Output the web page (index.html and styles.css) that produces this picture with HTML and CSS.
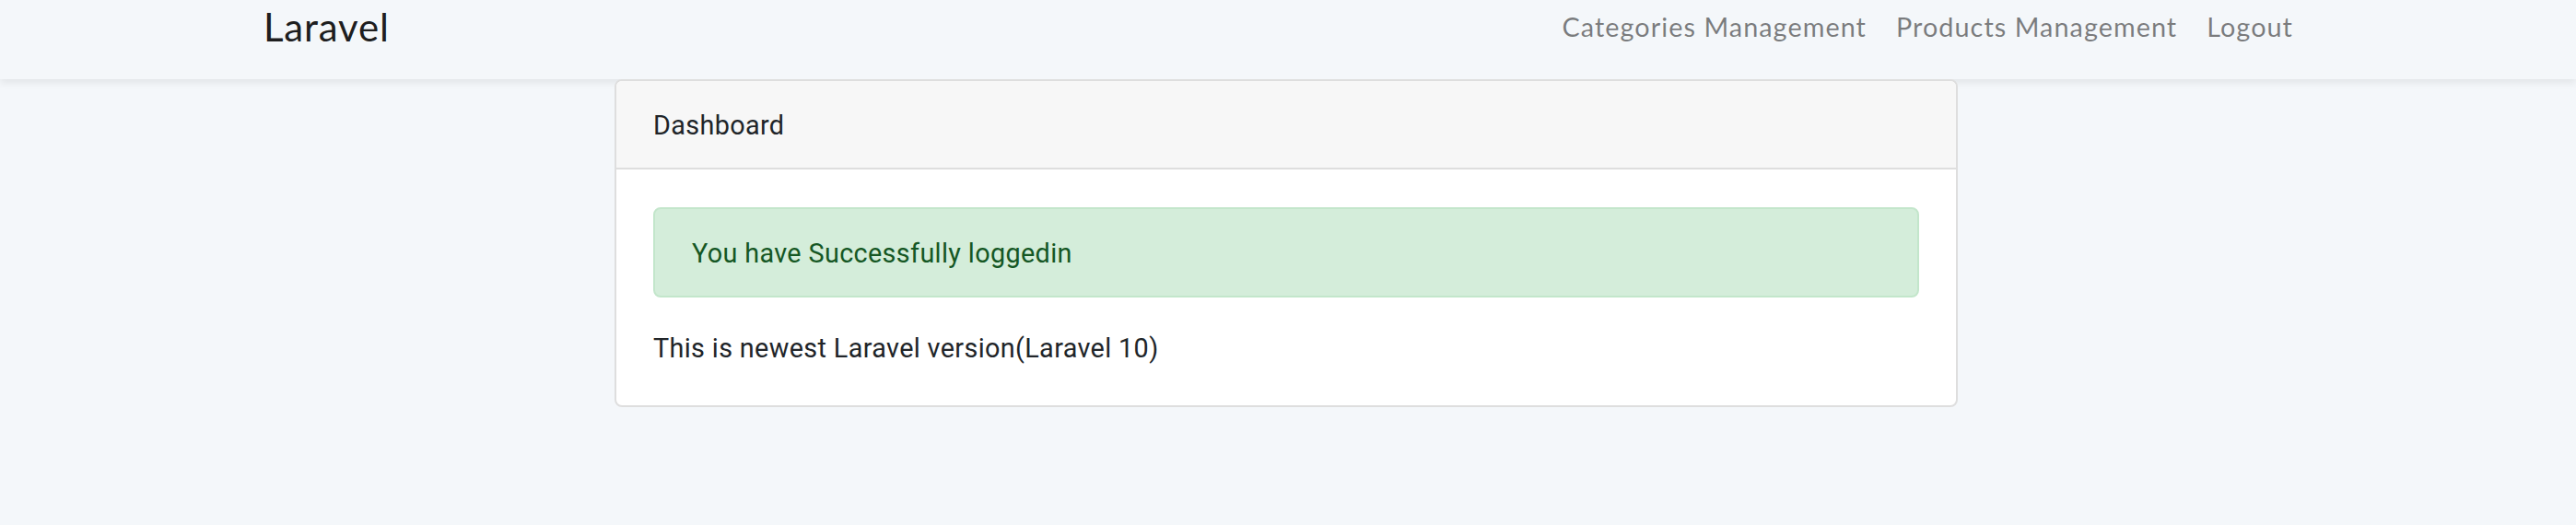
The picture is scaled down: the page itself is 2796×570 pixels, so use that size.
FILE: index.html
```html
<!DOCTYPE html>
<html lang="en">
<head>
<meta charset="utf-8">
<title>Laravel</title>
<link rel="stylesheet" href="styles.css">
</head>
<body>
<nav class="navbar">
  <div class="nav-container">
    <a class="brand" href="#">Laravel</a>
    <ul class="nav-links">
      <li><a class="nav-link" href="#">Categories Management</a></li>
      <li><a class="nav-link" href="#">Products Management</a></li>
      <li><a class="nav-link" href="#">Logout</a></li>
    </ul>
  </div>
</nav>
<main class="main">
  <div class="card">
    <div class="card-header">Dashboard</div>
    <div class="card-body">
      <div class="alert-success">You have Successfully loggedin</div>
      <p class="card-text">This is newest Laravel version(Laravel 10)</p>
    </div>
  </div>
</main>
</body>
</html>
```
FILE: styles.css
```css
html, body {
  margin: 0;
  padding: 0;
}

body {
  background: #f4f7fa;
  font-family: Roboto, "Liberation Sans", sans-serif;
  font-size: 28.8px;
  line-height: 46px;
  letter-spacing: 0.35px;
  color: #212529;
  height: 570px;
  overflow: hidden;
}

.navbar {
  height: 86px;
  background: #f4f7fa;
  box-shadow: 0 4px 8px rgba(0, 0, 0, 0.075);
}

.nav-container {
  width: 2280px;
  margin: 0 auto;
  box-sizing: border-box;
  padding: 0 33px 0 28px;
  height: 57px;
  display: flex;
  align-items: center;
  justify-content: space-between;
}

.brand {
  font-family: Lato, "Open Sans", sans-serif;
  font-size: 42px;
  line-height: 56px;
  color: rgba(0, 0, 0, 0.9);
  text-decoration: none;
  letter-spacing: 0.8px;
}

.nav-links {
  list-style: none;
  margin: 0;
  padding: 0;
  display: flex;
}

.nav-link {
  display: block;
  padding: 0 16px;
  font-family: Lato, "Open Sans", sans-serif;
  font-size: 28.8px;
  line-height: 56px;
  letter-spacing: 1.05px;
  color: rgba(0, 0, 0, 0.5);
  text-decoration: none;
}

.main {
  display: flex;
  justify-content: center;
  padding-right: 4px;
}

.card {
  width: 1458px;
  box-sizing: border-box;
  background: #fff;
  border: 2px solid #dedede;
  border-radius: 8px;
  overflow: hidden;
}

.card-header {
  background: #f7f7f7;
  border-bottom: 2px solid #dedede;
  padding: 25px 40px 23px;
}

.card-body {
  padding: 41px 40px 39px;
}

.alert-success {
  background: #d4edda;
  border: 2px solid #c3e6cb;
  border-radius: 8px;
  color: #155724;
  padding: 25px 40px 23px;
  margin-bottom: 32px;
}

.card-text {
  margin: 0;
}
```
